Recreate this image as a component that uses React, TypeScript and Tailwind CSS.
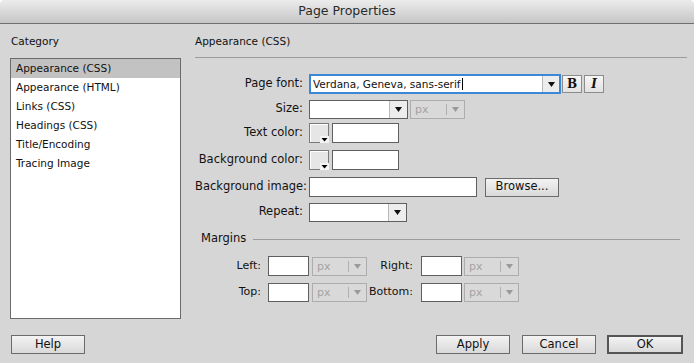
import React from "react";

const ui = { fontFamily: '"DejaVu Sans", "Lucida Grande", sans-serif' };

function Arrow({ disabled = false }: { disabled?: boolean }) {
  return (
    <svg width="7" height="5" viewBox="0 0 7 5">
      <polygon points="0,0 7,0 3.5,5" fill={disabled ? "#9a9a9a" : "#111"} />
    </svg>
  );
}

function Select({
  w,
  value = "",
  disabled = false,
}: {
  w: string;
  value?: string;
  disabled?: boolean;
}) {
  if (disabled) {
    return (
      <div
        className={`${w} flex h-[19px] items-center border border-[#adadad] bg-[#d9d9d9]`}
      >
        <span className="flex-1 pl-[4px] text-[11px] leading-none text-[#a3a3a3]">
          {value}
        </span>
        <span className="h-[11px] w-px bg-[#b0b0b0]" />
        <span className="flex w-[17px] items-center justify-center">
          <Arrow disabled />
        </span>
      </div>
    );
  }
  return (
    <div className={`${w} flex h-[19px] border border-[#5f5f5f] bg-white`}>
      <span className="flex-1 pl-[4px] text-[11px] leading-[17px]">{value}</span>
      <span className="flex w-[18px] items-center justify-center border-l border-[#b8b8b8] bg-[#ededed]">
        <Arrow />
      </span>
    </div>
  );
}

function TextBox({ w, h = "h-[20px]" }: { w: string; h?: string }) {
  return <div className={`${w} ${h} border border-[#5f5f5f] bg-white`} />;
}

function Swatch() {
  return (
    <div className="relative h-[20px] w-[20px] border border-[#7a7a7a] bg-[#e6e6e6]">
      <div className="h-full w-full border-l border-t border-white" />
      <svg
        className="absolute bottom-[-1px] right-[-1px]"
        width="9"
        height="7"
        viewBox="0 0 9 7"
      >
        <rect x="0" y="0" width="9" height="7" fill="#f4f4f4" />
        <polygon points="1.5,2 7.5,2 4.5,5.5" fill="#000" />
      </svg>
    </div>
  );
}

function Button({
  children,
  w,
  primary = false,
}: {
  children: React.ReactNode;
  w: string;
  primary?: boolean;
}) {
  return (
    <div
      className={`${w} flex h-[19px] items-center justify-center bg-gradient-to-b from-[#f3f3f3] to-[#d9d9d9] text-[11.5px] text-[#111] ${
        primary ? "border-2 border-[#555]" : "border border-[#6b6b6b]"
      }`}
    >
      {children}
    </div>
  );
}

function Row({
  label,
  mt,
  children,
}: {
  label: string;
  mt: string;
  children: React.ReactNode;
}) {
  return (
    <div className={`${mt} flex h-[20px] items-center`}>
      <span className="w-[108px] whitespace-nowrap text-right text-[11.5px] text-[#111]">
        {label}
      </span>
      <div className="ml-[6px] flex items-center">{children}</div>
    </div>
  );
}

const categories = [
  "Appearance (CSS)",
  "Appearance (HTML)",
  "Links (CSS)",
  "Headings (CSS)",
  "Title/Encoding",
  "Tracing Image",
];

export default function App() {
  return (
    <div
      style={ui}
      className="flex h-[363px] w-[694px] flex-col overflow-hidden rounded-t-[5px] bg-[#d6d6d6] text-[#111]"
    >
      <div className="flex h-[24px] items-center justify-center border-b border-[#6e6e6e] bg-gradient-to-b from-[#ececec] to-[#c6c6c6] text-[12.5px] text-[#2a2a2a]">
        Page Properties
      </div>

      <div className="flex h-[295px]">
        <div className="ml-[10px] flex w-[171px] flex-col">
          <div className="h-[34px] pl-[1px] pt-[10px] text-[10.5px] leading-[14px]">
            Category
          </div>
          <div className="flex-1 border border-[#6b6b6b] bg-white">
            {categories.map((c, i) => (
              <div
                key={c}
                className={`flex h-[19px] items-center pl-[5px] text-[10.5px] ${
                  i === 0 ? "bg-[#c2c2c2]" : ""
                }`}
              >
                {c}
              </div>
            ))}
          </div>
        </div>

        <div className="ml-[14px] flex w-[492px] flex-col">
          <div className="h-[34px] border-b border-[#9c9c9c] pt-[10px] text-[10.5px] leading-[14px]">
            Appearance (CSS)
          </div>

          <Row label="Page font:" mt="mt-[16px]">
            <div className="flex h-[20px] w-[252px] border-2 border-[#3b87d8] bg-white">
              <span className="flex-1 pl-[2px] text-[10.5px] leading-[16px]">
                Verdana, Geneva, sans-serif
                <span className="ml-[1px] inline-block h-[12px] w-px translate-y-[2px] bg-black" />
              </span>
              <span className="flex w-[17px] items-center justify-center border-l border-[#b8b8b8] bg-[#ededed]">
                <Arrow />
              </span>
            </div>
            <div className="ml-[1px] flex h-[18px] w-[20px] items-center justify-center border border-[#8c8c8c] bg-gradient-to-b from-[#f6f6f6] to-[#e2e2e2] font-['DejaVu_Serif'] text-[12px] font-bold leading-none">
              B
            </div>
            <div className="ml-[2px] flex h-[18px] w-[20px] items-center justify-center border border-[#8c8c8c] bg-gradient-to-b from-[#f6f6f6] to-[#e2e2e2] font-['DejaVu_Serif'] text-[12px] font-bold italic leading-none">
              I
            </div>
          </Row>

          <Row label="Size:" mt="mt-[5px]">
            <Select w="w-[99px]" />
            <div className="ml-[2px]">
              <Select w="w-[55px]" value="px" disabled />
            </div>
          </Row>

          <Row label="Text color:" mt="mt-[4px]">
            <Swatch />
            <div className="ml-[3px]">
              <TextBox w="w-[67px]" />
            </div>
          </Row>

          <Row label="Background color:" mt="mt-[7px]">
            <Swatch />
            <div className="ml-[3px]">
              <TextBox w="w-[67px]" />
            </div>
          </Row>

          <Row label="Background image:" mt="mt-[7px]">
            <TextBox w="w-[168px]" />
            <div className="ml-[8px]">
              <Button w="w-[74px]">Browse...</Button>
            </div>
          </Row>

          <Row label="Repeat:" mt="mt-[5px]">
            <Select w="w-[98px]" />
          </Row>

          <div className="mt-[10px] flex h-[14px] items-center">
            <span className="pl-[6px] text-[11.5px]">Margins</span>
            <span className="ml-[7px] h-px flex-1 bg-[#9c9c9c]" />
            <span className="w-[7px]" />
          </div>

          <div className="mt-[10px] flex h-[20px] items-center text-[11px]">
            <span className="w-[66px] text-right">Left:</span>
            <div className="ml-[7px]">
              <TextBox w="w-[41px]" />
            </div>
            <div className="ml-[3px]">
              <Select w="w-[55px]" value="px" disabled />
            </div>
            <span className="w-[46px] text-right">Right:</span>
            <div className="ml-[8px]">
              <TextBox w="w-[41px]" />
            </div>
            <div className="ml-[2px]">
              <Select w="w-[55px]" value="px" disabled />
            </div>
          </div>

          <div className="mt-[6px] flex h-[20px] items-center text-[11px]">
            <span className="w-[66px] text-right">Top:</span>
            <div className="ml-[7px]">
              <TextBox w="w-[41px]" h="h-[19px]" />
            </div>
            <div className="ml-[3px]">
              <Select w="w-[55px]" value="px" disabled />
            </div>
            <span className="w-[46px] whitespace-nowrap text-right">Bottom:</span>
            <div className="ml-[8px]">
              <TextBox w="w-[41px]" h="h-[19px]" />
            </div>
            <div className="ml-[2px]">
              <Select w="w-[55px]" value="px" disabled />
            </div>
          </div>
        </div>
      </div>

      <div className="mt-[16px] flex items-center px-[11px]">
        <Button w="w-[74px]">Help</Button>
        <div className="flex-1" />
        <Button w="w-[74px]">Apply</Button>
        <div className="ml-[12px]">
          <Button w="w-[74px]">Cancel</Button>
        </div>
        <div className="ml-[11px]">
          <Button w="w-[76px]" primary>
            OK
          </Button>
        </div>
      </div>
    </div>
  );
}
